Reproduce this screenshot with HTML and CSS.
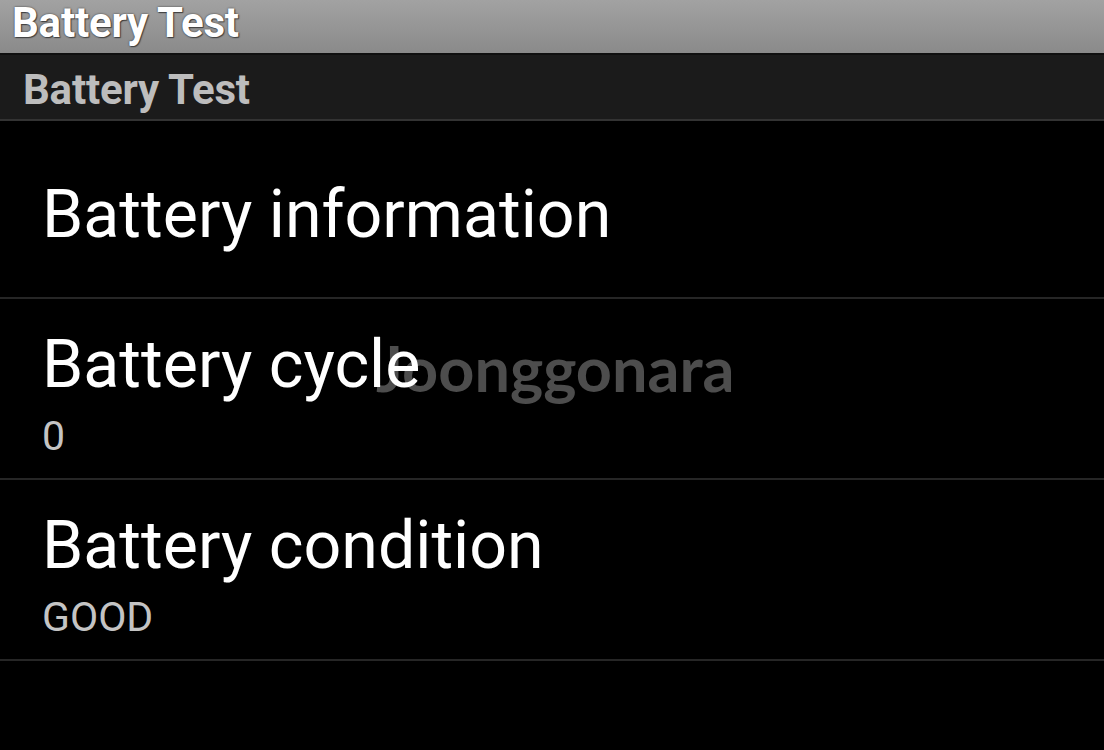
FILE: index.html
```html
<!DOCTYPE html>
<html>
<head>
<meta charset="utf-8">
<link rel="stylesheet" href="styles.css">
</head>
<body>
<div class="screen">
  <header class="titlebar"><span class="title">Battery Test</span></header>
  <div class="subbar"><span class="subtitle">Battery Test</span></div>
  <ul class="list">
    <li class="item item-single"><div class="item-title">Battery information</div></li>
    <li class="item"><div class="item-title">Battery cycle</div><div class="item-sub">0</div></li>
    <li class="item"><div class="item-title">Battery condition</div><div class="item-sub">GOOD</div></li>
  </ul>
  <div class="watermark">Joonggonara</div>
</div>
</body>
</html>
```
FILE: styles.css
```css
html, body {
  margin: 0;
  padding: 0;
  background: #000;
}
.screen {
  position: relative;
  width: 1104px;
  height: 750px;
  overflow: hidden;
  background: #000;
  font-family: Roboto, "Liberation Sans", sans-serif;
}
.titlebar {
  height: 53px;
  background: linear-gradient(#a2a2a2, #8a8a8a);
  border-bottom: 2px solid #101010;
  display: flex;
  align-items: center;
  padding-left: 12px;
  box-sizing: content-box;
}
.title {
  font-weight: 700;
  font-size: 42px;
  color: #fff;
  text-shadow: 0 0 2px #333, 1px 1px 1px #444;
  line-height: 1;
  margin-top: -8px;
  letter-spacing: -0.2px;
}
.subbar {
  height: 64px;
  background: #1b1b1b;
  border-bottom: 2px solid #333;
  display: flex;
  align-items: center;
  padding-left: 23px;
}
.subtitle {
  font-weight: 700;
  font-size: 42px;
  color: #bdbdbd;
  line-height: 1;
  margin-top: 6px;
  letter-spacing: -0.2px;
}
.list {
  position: relative;
  z-index: 1;
  list-style: none;
  margin: 0;
  padding: 0;
}
.item {
  height: 179px;
  border-bottom: 2px solid #262626;
  display: flex;
  flex-direction: column;
  justify-content: center;
  padding-left: 42px;
  padding-top: 17px;
  box-sizing: border-box;
}
.item:first-child { height: 178px; }
.item + .item { height: 181px; }
.item-title {
  font-size: 66.3px;
  color: #fff;
  line-height: 1;
  margin-top: -6px;
}
.item-sub {
  font-size: 41px;
  color: #c4c4c4;
  line-height: 1;
  margin-top: 18px;
}
.watermark {
  position: absolute;
  left: 376px;
  top: 336px;
  font-family: Lato, "DejaVu Sans", sans-serif;
  font-weight: 700;
  font-size: 63px;
  color: #4d4d4d;
  line-height: 1;
  z-index: 0;
}
```
